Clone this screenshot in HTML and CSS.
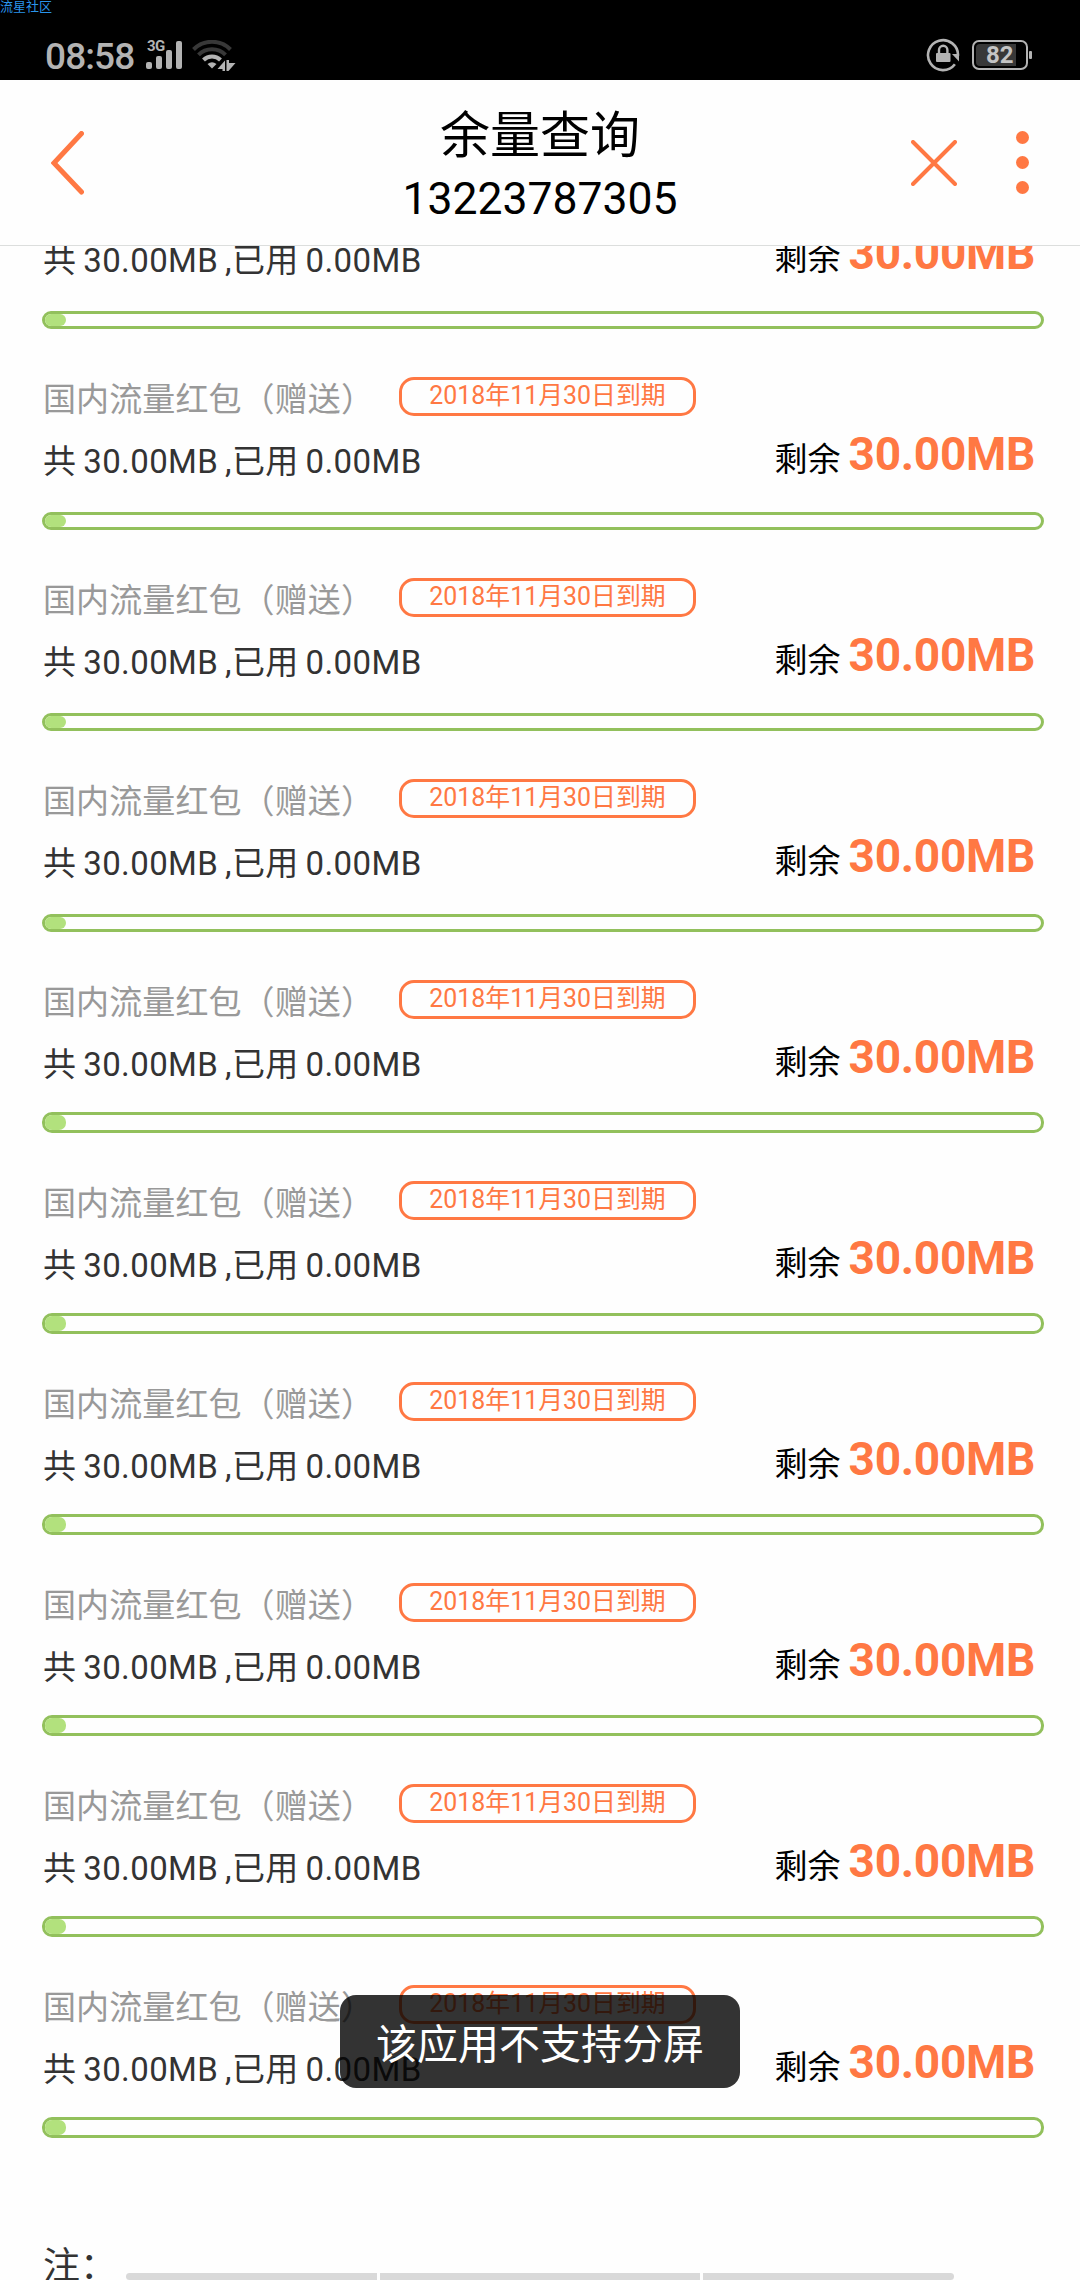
FILE: index.html
```html
<!DOCTYPE html>
<html lang="zh-CN">
<head>
    <meta charset="UTF-8">
    <meta name="viewport" content="width=device-width, initial-scale=1.0">
    <title>余量查询</title>
    <link rel="stylesheet" href="styles.css">
</head>
<body>
    <div class="screen">

        <!-- Phone status bar -->
        <div class="status-bar">
            <span class="watermark">流星社区</span>
            <div class="status-left">
                <span class="clock">08:58</span>
                <div class="signal">
                    <span class="network">3G</span>
                    <svg width="36" height="30" viewBox="0 0 36 30" fill="#b3b3b3">
                        <rect x="0" y="21" width="6" height="7" rx="2"/>
                        <rect x="10" y="15" width="6" height="13" rx="2"/>
                        <rect x="20" y="9" width="6" height="19" rx="2"/>
                        <rect x="30" y="0" width="6" height="28" rx="2"/>
                    </svg>
                </div>
                <svg class="wifi" width="44" height="32" viewBox="0 0 44 32" fill="none">
                    <path d="M1.5 9.5 A26 26 0 0 1 38.5 9.5" stroke="#383838" stroke-width="4"/>
                    <path d="M6.5 14.8 A19 19 0 0 1 33.5 14.8" stroke="#383838" stroke-width="4"/>
                    <path d="M11.5 20 A12 12 0 0 1 28.5 20" stroke="#b3b3b3" stroke-width="4"/>
                    <path d="M15.5 24 Q20 20.5 24.5 24 L20 28.5 Z" fill="#b3b3b3"/>
                    <path d="M25.5 29 L33 20.5 V31 H30.5 V29 Z M34.5 20 H37 V23 H43.5 L36.5 31 H34.5 Z" fill="#b3b3b3"/>
                </svg>
            </div>
            <div class="status-right">
                <svg width="34" height="34" viewBox="0 0 34 34" fill="none">
                    <path d="M28.9 26.3 A15 15 0 1 1 32 17.8" stroke="#b3b3b3" stroke-width="2.6"/>
                    <path d="M26 16 H33 V23.5 Z" fill="#b3b3b3"/>
                    <rect x="10" y="15" width="14.5" height="9" rx="1" fill="#b3b3b3"/>
                    <path d="M13 15 V12 A4.2 4.2 0 0 1 21.4 12 V15" stroke="#b3b3b3" stroke-width="2.4"/>
                </svg>
                <div class="battery">
                    <div class="battery-level">82</div>
                </div>
                <span class="battery-tip"></span>
            </div>
        </div>

        <header class="title-bar">
            <svg class="icon-back" width="33" height="64" viewBox="0 0 33 64">
                <path d="M30.5 2.5 L3 32 L30.5 61"/>
            </svg>
            <div class="title-text">
                <h1>余量查询</h1>
                <p>13223787305</p>
            </div>
            <div class="title-actions">
                <svg class="icon-close" width="46" height="46" viewBox="0 0 46 46">
                    <path d="M2 2 L44 44 M44 2 L2 44"/>
                </svg>
                <div class="icon-more">
                    <span></span>
                    <span></span>
                    <span></span>
                </div>
            </div>
        </header>

        <main class="content">
            <div class="package-list" id="package-list">
                <!-- Package items will appear here -->
            </div>
            <p class="note">注：</p>
        </main>

        <div class="toast">该应用不支持分屏</div>

        <!-- Gesture hints at the bottom edge -->
        <div class="nav-hints">
            <span></span>
            <span></span>
            <span></span>
        </div>
    </div>

    <script>
        const packages = [];
        for (let i = 0; i < 10; i++) {
            packages.push({
                name: '国内流量红包（赠送）',
                expire: '2018年11月30日到期',
                total: '30.00MB',
                used: '0.00MB',
                left: '30.00MB'
            });
        }

        function renderPackages() {
            const list = document.getElementById('package-list');
            list.innerHTML = packages.map(item => `
                <div class="package">
                    <div class="package-head">
                        <span class="package-name">${item.name}</span>
                        <span class="package-expire">${item.expire}</span>
                    </div>
                    <div class="package-info">
                        <span class="package-usage">共 ${item.total} ,已用 ${item.used}</span>
                        <span class="package-left">剩余 <b>${item.left}</b></span>
                    </div>
                    <div class="progress"><div class="progress-fill"></div></div>
                </div>
            `).join('');
        }

        renderPackages();
    </script>
</body>
</html>
```

FILE: styles.css
```css
* {
    box-sizing: border-box;
}

body {
    margin: 0;
    background-color: #fefefe;
    font-family: Roboto, 'Noto Sans CJK SC', sans-serif;
    color: #333;
}

h1, p {
    margin: 0;
    font-weight: 400;
}

svg {
    display: block;
}

.screen {
    position: relative;
    display: flex;
    flex-direction: column;
    width: 1080px;
    height: 2280px;
    overflow: hidden;
}

/* Status bar */
.status-bar {
    position: relative;
    display: flex;
    justify-content: space-between;
    flex: none;
    height: 80px;
    padding: 0 48px 0 45px;
    background-color: #000;
    color: #b3b3b3;
}

.watermark {
    position: absolute;
    top: 0;
    left: 0;
    font-size: 13px;
    line-height: 13px;
    color: #2a94ea;
}

.status-left {
    display: flex;
    align-items: flex-start;
}

.clock {
    width: 101px;
    padding-top: 35px;
    font-size: 37px;
    line-height: 44px;
    font-weight: 500;
    letter-spacing: -0.9px;
}

.signal {
    position: relative;
    padding-top: 41px;
}

.network {
    position: absolute;
    top: 39px;
    left: 1px;
    font-size: 15px;
    line-height: 15px;
    font-weight: 700;
    letter-spacing: -0.5px;
}

.wifi {
    margin: 40px 0 0 10px;
}

.status-right {
    display: flex;
    align-items: center;
    padding-top: 30px;
}

.battery {
    width: 56px;
    height: 30px;
    margin-left: 12px;
    padding: 2px;
    border: 2px solid #b3b3b3;
    border-radius: 7px;
}

.battery-level {
    width: 40px;
    height: 22px;
    padding-left: 10px;
    background-color: #383838;
    border-radius: 4px 0 0 4px;
    font-size: 24px;
    line-height: 23px;
    font-weight: 700;
    color: #c4c4c4;
}

.battery-tip {
    width: 3px;
    height: 8px;
    margin-left: 1px;
    background-color: #b3b3b3;
    border-radius: 1px;
}

/* Title bar */
.title-bar {
    display: grid;
    grid-template-columns: 300px 1fr 300px;
    flex: none;
    height: 166px;
    padding: 0 51px;
    border-bottom: 1px solid #dcdedd;
    color: #000;
}

.icon-back {
    margin-top: 51px;
    fill: none;
    stroke: #ff7843;
    stroke-width: 5;
    stroke-linecap: round;
}

.title-text {
    text-align: center;
}

.title-text h1 {
    margin-top: 23px;
    font-size: 50px;
    line-height: 66px;
}

.title-text p {
    font-size: 44.5px;
    line-height: 60px;
}

.title-actions {
    display: flex;
    justify-content: flex-end;
    gap: 59px;
}

.icon-close {
    margin-top: 60px;
    fill: none;
    stroke: #ff7843;
    stroke-width: 4;
    stroke-linecap: round;
}

.icon-more {
    display: flex;
    flex-direction: column;
    justify-content: space-between;
    height: 63px;
    margin-top: 51px;
}

.icon-more span {
    width: 13px;
    height: 13px;
    background-color: #ff7843;
    border-radius: 50%;
}

/* Package list, scrolled so that the first item is cut by the title bar */
.content {
    flex: 1;
    min-height: 0;
    overflow: hidden;
    padding: 0 36px 0 42px;
}

.package-list {
    margin-top: -70px;
}

.package {
    height: 201px;
}

.package-head {
    display: flex;
    height: 39px;
}

.package-name {
    width: 357px;
    padding-left: 1px;
    font-size: 33px;
    line-height: 46px;
    letter-spacing: 0.1px;
    color: #999;
}

.package-expire {
    width: 297px;
    height: 39px;
    border: 3px solid #ff7843;
    border-radius: 15px;
    font-size: 24.9px;
    line-height: 32px;
    text-align: center;
    color: #ff7843;
}

.package-info {
    display: flex;
    justify-content: space-between;
    height: 96px;
    padding: 0 9px 0 1px;
    font-size: 33px;
    line-height: 44px;
}

.package-usage {
    padding-top: 24px;
    letter-spacing: 0.4px;
    word-spacing: -1.8px;
}

.package-left {
    padding-top: 16px;
    color: #000;
}

.package-left b {
    vertical-align: 1px;
    font-size: 46px;
    letter-spacing: -0.3px;
    color: #ff7843;
}

.progress {
    height: 18px;
    border: 3px solid #92c05c;
    border-radius: 9px;
}

.progress-fill {
    width: 21px;
    height: 100%;
    background-color: #b2e17d;
    border-radius: 7px;
}

.package:nth-child(n+5) .progress {
    height: 21px;
    margin-top: -3px;
    border-radius: 10px;
}

.note {
    margin-top: 53px;
    padding-left: 1px;
    font-size: 37px;
    line-height: 56px;
}

/* Overlays */
.toast {
    position: absolute;
    top: 1995px;
    left: 340px;
    z-index: 2;
    width: 400px;
    height: 93px;
    background-color: rgba(0, 0, 0, 0.8);
    border-radius: 16px;
    font-size: 41px;
    line-height: 100px;
    text-align: center;
    color: #fff;
}

.nav-hints {
    position: absolute;
    bottom: 0;
    left: 126px;
    z-index: 2;
    display: grid;
    grid-template-columns: 251px 320px 251px;
    gap: 3px;
    height: 7px;
}

.nav-hints span {
    background-color: #d9d9d9;
}

.nav-hints span:first-child {
    border-radius: 4px 0 0 4px;
}

.nav-hints span:last-child {
    border-radius: 0 4px 4px 0;
}
```
